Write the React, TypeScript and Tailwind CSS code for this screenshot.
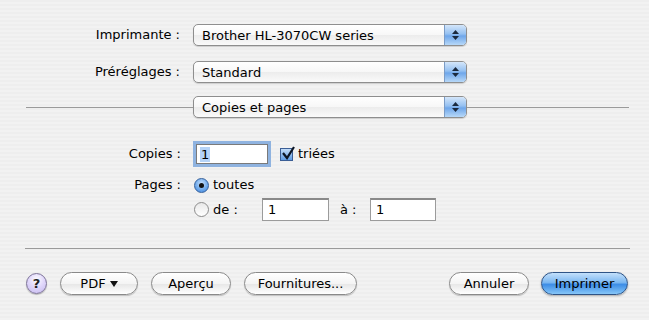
import React from "react";

const font = "font-['DejaVu_Sans',sans-serif]";

function Popup({ label, width = "w-[274px]" }: { label: string; width?: string }) {
  return (
    <div
      className={`${width} h-[22px] flex rounded-[5px] border border-[#8e8e8e] bg-[linear-gradient(180deg,#ffffff_0%,#f7f7f7_50%,#ececec_51%,#fafafa_100%)] shadow-[0_1px_1px_rgba(0,0,0,0.15)] overflow-hidden`}
    >
      <div className="flex-1 flex items-center pl-[8px] text-[13px] text-black leading-none">{label}</div>
      <div className="w-[22px] flex flex-col items-center justify-center gap-[2px] border-l border-[#7b9cc6] bg-[linear-gradient(180deg,#d4e6fa_0%,#94c0f1_45%,#6ea6ea_55%,#b7d8f8_100%)]">
        <svg width="7" height="4" viewBox="0 0 7 4">
          <path d="M3.5 0 L7 4 L0 4 Z" fill="#1b2a3e" />
        </svg>
        <svg width="7" height="4" viewBox="0 0 7 4">
          <path d="M0 0 L7 0 L3.5 4 Z" fill="#1b2a3e" />
        </svg>
      </div>
    </div>
  );
}

function Button({ label, className = "" }: { label: React.ReactNode; className?: string }) {
  return (
    <div
      className={`h-[23px] flex items-center justify-center rounded-full border border-[#8a8a8a] bg-[linear-gradient(180deg,#ffffff_0%,#f4f4f4_50%,#e6e6e6_51%,#ffffff_100%)] shadow-[0_1px_1px_rgba(0,0,0,0.2)] text-[13px] text-black ${className}`}
    >
      {label}
    </div>
  );
}

function Field({ value, width }: { value: string; width: string }) {
  return (
    <div
      className={`${width} h-[23px] flex items-center pl-[5px] bg-white border border-[#9b9b9b] border-t-[2px] border-t-[#8a8a8a] text-[13px] text-black`}
    >
      {value}
    </div>
  );
}

function Radio({ checked }: { checked?: boolean }) {
  return checked ? (
    <div className="w-[15px] h-[15px] rounded-full border border-[#34609c] bg-[radial-gradient(circle_at_50%_35%,#c9e1fb_0%,#6aa6ea_60%,#3f84dc_100%)] flex items-center justify-center">
      <div className="w-[5px] h-[5px] rounded-full bg-[#111]" />
    </div>
  ) : (
    <div className="w-[15px] h-[15px] rounded-full border border-[#8c8c8c] bg-[linear-gradient(180deg,#e8e8e8,#ffffff)]" />
  );
}

export default function App() {
  return (
    <div
      className={`${font} w-[649px] h-[320px] bg-[repeating-linear-gradient(180deg,#eeeeee_0px,#eeeeee_2px,#f2f2f2_2px,#f2f2f2_4px)] text-black flex flex-col`}
    >
      {/* top popups */}
      <div className="pt-[24px] flex flex-col gap-[15px]">
        <div className="flex items-center">
          <div className="w-[180px] text-right text-[13px]">Imprimante :</div>
          <div className="ml-[13px]">
            <Popup label="Brother HL-3070CW series" />
          </div>
        </div>
        <div className="flex items-center">
          <div className="w-[180px] text-right text-[13px]">Préréglages :</div>
          <div className="ml-[13px]">
            <Popup label="Standard" />
          </div>
        </div>
      </div>

      {/* panel selector */}
      <div className="mt-[13px] flex items-center">
        <div className="ml-[26px] w-[167px] h-px bg-[#9a9a9a]" />
        <Popup label="Copies et pages" />
        <div className="w-[162px] h-px bg-[#9a9a9a]" />
      </div>

      {/* copies & pages */}
      <div className="mt-[26px] flex items-center">
        <div className="w-[181px] text-right text-[13px]">Copies :</div>
        <div className="ml-[15px] w-[72px] h-[20px] flex items-center pl-[3px] bg-white border border-[#7a7a7a] ring-[3px] ring-[#8fb3e0] text-[13px]">
          <span className="bg-[#b5d3f7] px-[1px] leading-[15px]">1</span>
        </div>
        <div className="ml-[12px] relative w-[13px] h-[13px] border border-[#3b5e95] bg-[linear-gradient(180deg,#c3dcf8,#5f9de6)]">
          <svg className="absolute -top-[3px] left-[0px]" width="15" height="15" viewBox="0 0 15 15">
            <path d="M2 7 L6 12 L13 1" stroke="#0c1626" strokeWidth="2.2" fill="none" />
          </svg>
        </div>
        <span className="ml-[5px] text-[13px]">triées</span>
      </div>

      <div className="mt-[12px] flex">
        <div className="w-[181px] text-right text-[13px] leading-[18px]">Pages :</div>
        <div className="ml-[13px] flex flex-col">
          <div className="flex items-center h-[18px] gap-[4px]">
            <Radio checked />
            <span className="text-[13px]">toutes</span>
          </div>
          <div className="mt-[4px] flex items-center gap-[4px]">
            <Radio />
            <span className="text-[13px] w-[45px]">de :</span>
            <Field value="1" width="w-[67px]" />
            <span className="ml-[7px] w-[26px] text-[13px]">à :</span>
            <Field value="1" width="w-[66px]" />
          </div>
        </div>
      </div>

      {/* bottom separator */}
      <div className="mt-[27px] ml-[25px] w-[605px] h-px bg-[#9a9a9a]" />

      {/* buttons */}
      <div className="mt-[23px] flex items-center">
        <div className="ml-[26px] w-[21px] h-[21px] rounded-full border border-[#7d7398] bg-[radial-gradient(circle_at_50%_30%,#ffffff_0%,#e1d8fb_45%,#c5b8ee_100%)] shadow-[0_1px_1px_rgba(0,0,0,0.25)] flex items-center justify-center text-[13px] font-bold text-[#222]">
          ?
        </div>
        <Button
          className="ml-[13px] w-[78px]"
          label={
            <span className="flex items-center gap-[4px]">
              PDF
              <svg width="8" height="6" viewBox="0 0 8 6">
                <path d="M0 0 L8 0 L4 6 Z" fill="#111" />
              </svg>
            </span>
          }
        />
        <Button className="ml-[13px] w-[80px]" label="Aperçu" />
        <Button className="ml-[13px] w-[113px]" label="Fournitures..." />
        <Button className="ml-[92px] w-[80px]" label="Annuler" />
        <div className="ml-[12px] w-[87px] h-[23px] flex items-center justify-center rounded-full border border-[#2f5486] bg-[linear-gradient(180deg,#c3e0fb_0%,#7bb7f1_45%,#3d8de6_55%,#86c6f8_100%)] shadow-[0_1px_2px_rgba(0,0,0,0.3)] text-[13px] text-black">
          Imprimer
        </div>
      </div>
    </div>
  );
}
